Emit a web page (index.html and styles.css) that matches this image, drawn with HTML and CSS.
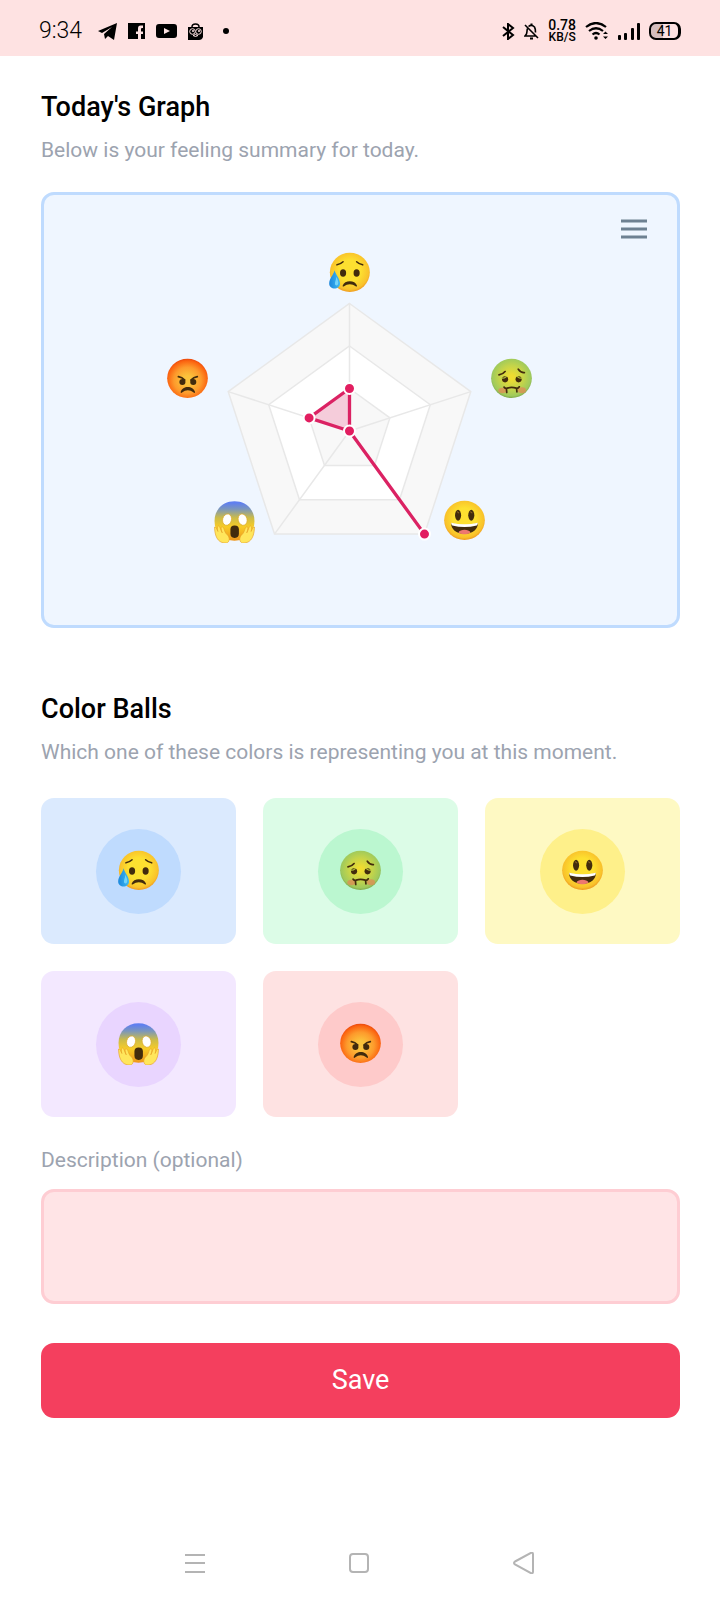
FILE: index.html
```html
<!DOCTYPE html>
<html lang="en">
<head>
<meta charset="utf-8">
<meta name="viewport" content="width=device-width, initial-scale=1">
<title>Today's Graph</title>
<link rel="stylesheet" href="styles.css">
</head>
<body>
<svg class="sprite" width="0" height="0" aria-hidden="true">
  <defs>
    <radialGradient id="yellow" cx="50%" cy="46%" r="54%">
      <stop offset="0.5" stop-color="#fde030"/><stop offset="0.88" stop-color="#f9c22b"/><stop offset="1" stop-color="#ef9b20"/>
    </radialGradient>
    <radialGradient id="red" cx="50%" cy="55%" r="56%">
      <stop offset="0.2" stop-color="#fbc33c"/><stop offset="0.6" stop-color="#fd9a2c"/><stop offset="0.88" stop-color="#fb6410"/><stop offset="1" stop-color="#e8420c"/>
    </radialGradient>
    <radialGradient id="green" cx="50%" cy="47%" r="54%">
      <stop offset="0.1" stop-color="#f0dc30"/><stop offset="0.55" stop-color="#c4d44a"/><stop offset="0.88" stop-color="#9fca5c"/><stop offset="1" stop-color="#7ba548"/>
    </radialGradient>
    <linearGradient id="fear" x1="0" y1="0" x2="0" y2="1">
      <stop offset="0.04" stop-color="#5f7ff0"/><stop offset="0.2" stop-color="#7c97ba"/><stop offset="0.42" stop-color="#ccbc48"/><stop offset="0.65" stop-color="#f8cc27"/><stop offset="1" stop-color="#ee961b"/>
    </linearGradient>
    <linearGradient id="drop" x1="0" y1="0" x2="1" y2="0">
      <stop offset="0" stop-color="#1c87dc"/><stop offset="1" stop-color="#3dbaf3"/>
    </linearGradient>
  </defs>
  <symbol id="sad" viewBox="0 0 120 124">
    <ellipse cx="61" cy="60" rx="59" ry="58" fill="url(#yellow)"/>
    <g fill="#422b0d">
      <ellipse cx="41" cy="62" rx="9" ry="11"/><ellipse cx="81" cy="62" rx="9" ry="11"/>
      <path d="M40 99c5-17 37-17 42 0 1 3-1 4-4 2-9-8-25-8-34 0-3 2-5 1-4-2z"/>
    </g>
    <path d="M23 38q11-2 18-9M99 38q-11-2-18-9" fill="none" stroke="#422b0d" stroke-width="4.500" stroke-linecap="round"/>
    <path d="M16 54c-3 14-16 24-16 39 0 20 32 20 32 0 0-15-13-25-16-39z" fill="url(#drop)"/>
    <path d="M21 73c4 8 8 17 5 23-4 6-9 2-9-3 0-6 4-11 4-20z" fill="#72d4fa"/>
  </symbol>
  <symbol id="sick" viewBox="0 0 120 124">
    <ellipse cx="60" cy="60" rx="60" ry="58" fill="url(#green)"/>
    <g fill="#e08b55" opacity=".75"><ellipse cx="33" cy="96" rx="12" ry="8"/><ellipse cx="91" cy="95" rx="12" ry="9"/></g>
    <g fill="#422b0d"><ellipse cx="41" cy="63" rx="9" ry="9"/><ellipse cx="81" cy="63" rx="9" ry="9"/></g>
    <path d="M29 60q11 0 17-6M93 60q-11 0-17-6" stroke="#b9c93e" stroke-width="3" fill="none"/>
    <g fill="none" stroke="#422b0d" stroke-width="5" stroke-linecap="round" stroke-linejoin="round">
      <path d="M23 50q12-2 18-10M80 33q8 11 18 10"/>
      <path d="M38 86q5 6 9 3 13-4 27 0 5 2 9-4M45 90l1 12M75 90l1 10"/>
    </g>
  </symbol>
  <symbol id="happy" viewBox="0 0 120 124">
    <ellipse cx="60" cy="60" rx="60" ry="58" fill="url(#yellow)"/>
    <g fill="#422b0d"><ellipse cx="41" cy="45" rx="9" ry="16"/><ellipse cx="80" cy="45" rx="9" ry="16"/></g>
    <path d="M39 35l4 3M78 35l4 3" stroke="#896024" stroke-width="3" stroke-linecap="round"/>
    <path d="M21 69q39 9 78 0c2 17-15 31-39 31S19 86 21 69z" fill="#422b0d"/>
    <path d="M42 96c5-11 31-11 36 0-9 7-27 7-36 0z" fill="#ed7770"/>
    <path d="M21 67q39 9 78 0 1 5-3 8-36 10-72 0-4-3-3-8z" fill="#fff"/>
  </symbol>
  <symbol id="scream" viewBox="0 0 120 124">
    <path d="M60 1c34 0 59 24 59 58 0 37-25 58-59 58S1 96 1 59C1 25 26 1 60 1z" fill="url(#fear)"/>
    <g fill="#fff" stroke="#dfab27" stroke-width="2">
      <ellipse cx="38" cy="55" rx="13" ry="17" transform="rotate(15 38 55)"/><ellipse cx="84" cy="55" rx="13" ry="17" transform="rotate(-15 84 55)"/>
    </g>
    <rect x="48" y="72" width="25" height="37" rx="12" fill="#422b0d"/>
    <g fill="#ffe65c" stroke="#e7a429" stroke-width="2">
      <path d="M1 77c5-1 7 7 10 13-2-7-3-15 1-16 6-1 7 14 12 20-3-8-6-17-1-18 7 0 6 15 14 22 11 10 9 24-1 26-18 1-34-9-35-47z"/>
      <path d="M119 77c-5-1-7 7-10 13 2-7 3-15-1-16-6-1-7 14-12 20 3-8 6-17 1-18-7 0-6 15-14 22-11 10-9 24 1 26 18 1 34-9 35-47z"/>
    </g>
  </symbol>
  <symbol id="angry" viewBox="0 0 120 124">
    <ellipse cx="60" cy="60" rx="60" ry="58" fill="url(#red)"/>
    <g fill="#422b0d">
      <ellipse cx="45" cy="71" rx="9" ry="9"/><ellipse cx="77" cy="71" rx="9" ry="9"/>
      <path d="M40 100c5-19 37-19 42 0 1 4-2 4-5 1-9-8-23-8-32 0-3 3-6 3-5-1z"/>
    </g>
    <path d="M33 55q11 2 19 10M89 55q-11 2-19 10" fill="none" stroke="#422b0d" stroke-width="5" stroke-linecap="round"/>
  </symbol>
</svg>

<header class="status">
  <div class="status-group notifications">
    <time class="clock">9:34</time>
    <svg width="19" height="17" viewBox="0 0 19 17"><path d="M0 8 19 0l-3 17-6-4-3 3-1-5 8-7-10 6z"/></svg>
    <svg width="17" height="16" viewBox="0 0 17 16"><path fill-rule="evenodd" d="M0 0h17v16h-4v-5h2V8.500h-2V6q0-1 1-1h1V2.500h-2.500Q10 2.500 10 5.500v3H8V11h2v5H0z"/></svg>
    <svg width="21" height="14" viewBox="0 0 21 14"><path fill-rule="evenodd" d="M3 0h15q3 0 3 3v8q0 3-3 3H3q-3 0-3-3V3q0-3 3-3zm5 4v6l6-3z"/></svg>
    <svg width="15" height="17" viewBox="0 0 15 17"><path d="M0 4h15v10q-1 3-4 3H0z"/><path d="M4 4q0-3 3.500-3T11 4" fill="none" stroke="#000" stroke-width="1.500"/><g fill="#000" stroke="#fee2e2"><circle cx="4.500" cy="8.500" r="2.800"/><circle cx="10.500" cy="8.500" r="2.800"/><path d="M5 12.500l2.500-1 2.500 1-2.500 1z"/></g><circle cx="5" cy="8" r="1" fill="#fee2e2"/><circle cx="11" cy="8" r="1" fill="#fee2e2"/></svg>
    <span class="dot"></span>
  </div>
  <div class="status-group">
    <svg width="13" height="17" viewBox="0 0 13 17" fill="none" stroke="#000" stroke-width="2"><path d="M1 4l10 8-5 4V1l5 4-10 8"/></svg>
    <svg width="15" height="17" viewBox="0 0 15 17" fill="none" stroke="#000" stroke-width="1.600"><path d="M4.500 3.500Q7.500 1 10.500 4q1 1.500 1 5.500M3.300 5.500Q3 9 2.500 11L1 13h11M1 2l13 13"/><path d="M6 15.500h3M6.500 1.500h2" stroke-width="2"/></svg>
    <div class="speed"><span class="speed-value">0.78</span><span class="speed-unit">KB/S</span></div>
    <svg width="24" height="18" viewBox="0 0 24 18" fill="none" stroke="#000" stroke-width="2.200"><path d="M1 5Q11-3 21 5M4 9q7-5.500 14 0M7.500 12.500q3.500-3 7 0"/><circle cx="11" cy="16" r="1.800" fill="#000" stroke="none"/><path d="M18 12l2.500-2.500L23 12zM18 14.500l2.500 2.500 2.500-2.500z" fill="#000" stroke="none"/></svg>
    <svg width="22" height="17" viewBox="0 0 22 17"><rect y="12" width="3" height="5" rx="1"/><rect x="6" y="10" width="3" height="7" rx="1"/><rect x="13" y="5" width="3" height="12" rx="1"/><rect x="19" width="3" height="17" rx="1"/></svg>
    <div class="battery">41</div>
  </div>
</header>

<main class="page">
  <section class="graph-section">
    <h1 class="title">Today's Graph</h1>
    <p class="subtitle">Below is your feeling summary for today.</p>
    <div class="card">
      <button class="menu" type="button" aria-label="Chart menu">
        <svg width="26" height="20" viewBox="0 0 26 20" stroke="#6e8192" stroke-width="3"><path d="M0 2h26M0 10h26M0 18h26"/></svg>
      </button>
      <svg class="chart" viewBox="44 195 633 430" role="img" aria-label="Feelings radar chart">
        <g stroke="#e8e8e8" stroke-width="1.500">
          <path fill="#f8f8f8" d="M349.500 303.500 470.800 391.600 424.500 534.100H274.500L228.200 391.600z"/>
          <path fill="#fff" d="M349.500 346 430.300 404.700 399.500 499.800H299.500L268.700 404.700z"/>
          <path fill="#f8f8f8" d="M349.500 388.500 389.900 417.900 374.500 465.400H324.500L309.100 417.900z"/>
          <path d="M349.500 431V303.500M349.500 431 470.800 391.600M349.500 431 424.500 534.100M349.500 431 274.500 534.100M349.500 431 228.200 391.600"/>
        </g>
        <path d="M349.500 388.500V431L424.500 534.100 349.500 431 309.100 417.900z" fill="#e91e63" fill-opacity=".2" stroke="#db2263" stroke-width="3.300" stroke-linejoin="round"/>
        <g fill="#e21e60" stroke="#fff" stroke-width="2">
          <circle cx="349.500" cy="388.500" r="5.500"/><circle cx="349.500" cy="431" r="5.500"/><circle cx="424.500" cy="534.100" r="5.500"/><circle cx="309.100" cy="417.900" r="5.500"/>
        </g>
        <use href="#sad" x="329" y="252" width="41" height="42"/>
        <use href="#sick" x="491" y="358" width="41" height="42"/>
        <use href="#happy" x="444" y="500" width="41" height="42"/>
        <use href="#scream" x="214" y="501" width="41" height="42"/>
        <use href="#angry" x="167" y="358" width="41" height="42"/>
      </svg>
    </div>
  </section>

  <form class="mood">
    <h2 class="title">Color Balls</h2>
    <p class="subtitle">Which one of these colors is representing you at this moment.</p>
    <div class="tiles">
      <button type="button" class="tile blue" aria-label="Sad"><span class="ball"><svg class="emoji"><use href="#sad"/></svg></span></button>
      <button type="button" class="tile green" aria-label="Disgusted"><span class="ball"><svg class="emoji"><use href="#sick"/></svg></span></button>
      <button type="button" class="tile yellow" aria-label="Happy"><span class="ball"><svg class="emoji"><use href="#happy"/></svg></span></button>
      <button type="button" class="tile purple" aria-label="Afraid"><span class="ball"><svg class="emoji"><use href="#scream"/></svg></span></button>
      <button type="button" class="tile red" aria-label="Angry"><span class="ball"><svg class="emoji"><use href="#angry"/></svg></span></button>
    </div>
    <label class="subtitle label" for="description">Description (optional)</label>
    <textarea id="description" class="description"></textarea>
    <button type="button" class="save">Save</button>
  </form>
</main>

<nav class="navbar">
  <button type="button" aria-label="Recent apps"><svg width="20" height="22" viewBox="0 0 20 22"><path d="M0 3h20M0 11h20M0 20h20"/></svg></button>
  <button type="button" aria-label="Home"><svg width="20" height="22" viewBox="0 0 20 22"><rect x="1" y="2" width="18" height="18" rx="3"/></svg></button>
  <button type="button" aria-label="Back"><svg width="22" height="22" viewBox="0 0 22 22"><path d="M2 9.500 18 .8q2-.6 2 1.400v17.600q0 2-2 1.400L2 12.500q-2-1.500 0-3z"/></svg></button>
</nav>
</body>
</html>
```

FILE: styles.css
```css
* {
  box-sizing: border-box;
}

body {
  margin: 0;
  min-height: 100vh;
  display: flex;
  flex-direction: column;
  background: #fff;
  color: #000;
  font-family: Roboto, "Liberation Sans", sans-serif;
}

button {
  border: 0;
  padding: 0;
  background: none;
  font: inherit;
  cursor: pointer;
}

svg {
  display: block;
}

.sprite {
  position: absolute;
}

.status {
  height: 56px;
  padding: 6px 39px 0;
  display: flex;
  align-items: center;
  justify-content: space-between;
  background: #fee2e2;
}

.status-group {
  display: flex;
  align-items: center;
  gap: 9px;
}

.notifications {
  gap: 11px;
}

.clock {
  margin-right: 5px;
  font-size: 23px;
  font-weight: 300;
  line-height: 28px;
}

.dot {
  width: 6px;
  height: 6px;
  margin-left: 9px;
  border-radius: 50%;
  background: #000;
}

.speed {
  display: flex;
  flex-direction: column;
  align-items: center;
  font-weight: 500;
}

.speed-value {
  font-size: 14px;
  line-height: 12px;
}

.speed-unit {
  font-size: 12px;
  line-height: 12px;
}

.battery {
  width: 32px;
  height: 18px;
  border: 2px solid #000;
  border-right-width: 3px;
  border-radius: 7px;
  background: linear-gradient(90deg, #d3bdbd 45%, #fee2e2 45%);
  font-size: 14px;
  line-height: 15px;
  text-align: center;
}

.page {
  padding: 33px 40px 0 41px;
}

.title {
  margin: 0 0 11px;
  font-size: 27px;
  font-weight: 500;
  line-height: 36px;
}

.subtitle {
  margin: 0;
  color: #9ca3af;
  font-size: 21px;
  line-height: 28px;
}

.card {
  position: relative;
  margin-top: 28px;
  border: 3px solid #bfdbfe;
  border-radius: 13px;
  background: #eff6ff;
}

.chart {
  width: 100%;
  height: auto;
}

.menu {
  position: absolute;
  top: 24px;
  right: 30px;
}

.mood {
  display: flex;
  flex-direction: column;
  margin-top: 63px;
}

.tiles {
  display: grid;
  grid-template-columns: repeat(3, 1fr);
  gap: 27px;
  margin: 32px 0 29px;
}

.tile {
  height: 146px;
  display: grid;
  place-items: center;
  border-radius: 13px;
}

.ball {
  width: 85px;
  height: 85px;
  display: grid;
  place-items: center;
  border-radius: 50%;
}

.emoji {
  width: 41px;
  height: 42px;
}

.blue { background: #dbeafe; }
.blue .ball { background: #bfdbfe; }
.green { background: #dcfce7; }
.green .ball { background: #bbf7d0; }
.yellow { background: #fef9c3; }
.yellow .ball { background: #fef08a; }
.purple { background: #f3e8ff; }
.purple .ball { background: #e9d5ff; }
.red { background: #fee2e2; }
.red .ball { background: #fecaca; }

.label {
  margin-bottom: 15px;
}

.description {
  height: 115px;
  padding: 12px;
  border: 3px solid #fecdd3;
  border-radius: 13px;
  background: #ffe4e6;
  font: inherit;
  resize: none;
}

.save {
  height: 75px;
  margin-top: 39px;
  padding-bottom: 2px;
  border-radius: 13px;
  background: #f43f5e;
  color: #fff;
  font-size: 27px;
}

.navbar {
  height: 74px;
  margin-top: auto;
  display: flex;
  align-items: center;
  justify-content: center;
  gap: 144px;
}

.navbar svg {
  fill: none;
  stroke: #b4b4b4;
  stroke-width: 2;
}
```
